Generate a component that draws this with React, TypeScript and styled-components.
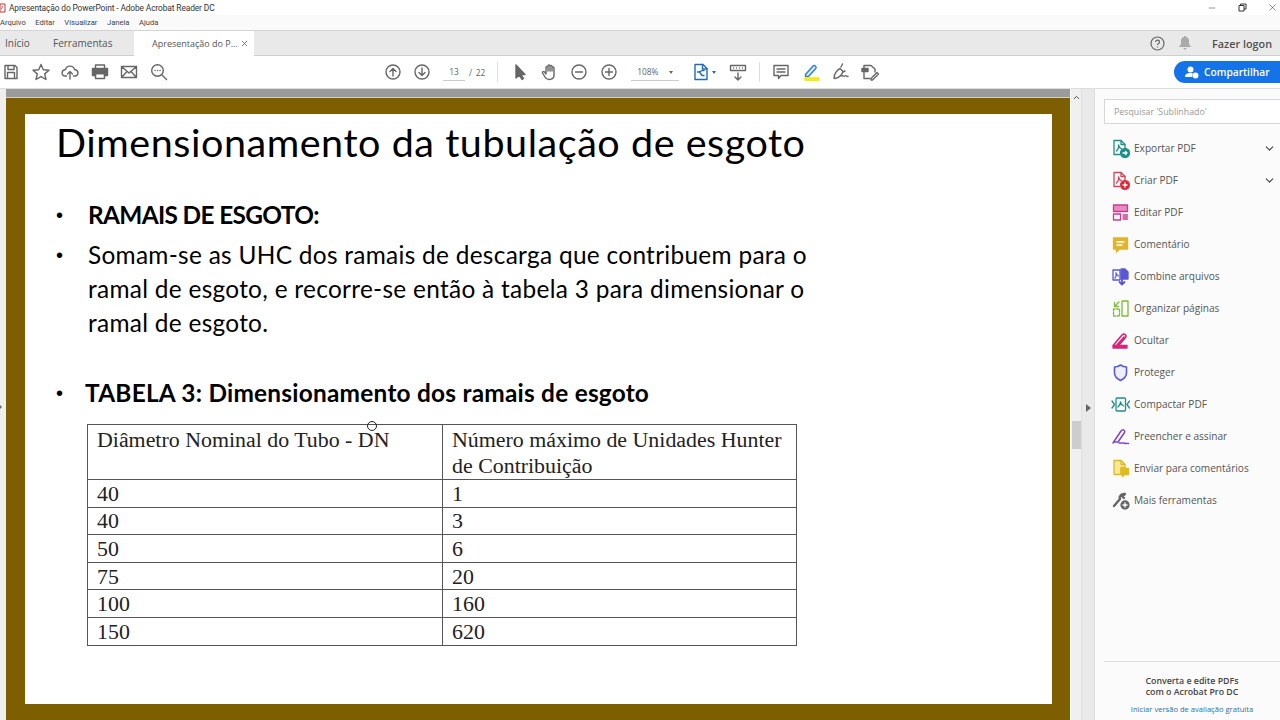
import React from "react";
import styled, { createGlobalStyle } from "styled-components";
import { ChevronDown, ChevronUp, Minus, X } from "lucide-react";

const GlobalStyle = createGlobalStyle`
  html, body {
    margin: 0;
    padding: 0;
    width: 1280px;
    height: 720px;
    overflow: hidden;
    background: #fff;
    font-family: "Open Sans", "Noto Sans", sans-serif;
  }
`;

const Window = styled.div`
  width: 1280px;
  height: 720px;
  display: flex;
  flex-direction: column;
  overflow: hidden;
  position: relative;
`;

const TitleBar = styled.div`
  height: 15px;
  display: flex;
  align-items: center;
  background: #fff;
  color: #333;
  font-family: Roboto, sans-serif;
  font-size: 8.4px;
  letter-spacing: -0.12px;
  flex: none;
`;

const TitleIcon = styled.svg`
  width: 6px;
  height: 10px;
  margin-right: 3px;
`;

const WindowButtons = styled.div`
  margin-left: auto;
  margin-right: -8px;
  display: flex;
  align-items: center;
  color: #333;
`;

const WindowButton = styled.div`
  width: 30.5px;
  display: flex;
  justify-content: center;
  align-items: center;
`;

const MenuBar = styled.div`
  height: 15px;
  display: flex;
  align-items: center;
  gap: 9.5px;
  background: #fafafa;
  color: #444;
  font-family: Roboto, sans-serif;
  font-size: 7.6px;
  flex: none;
`;

const TabBar = styled.div`
  height: 26px;
  display: flex;
  align-items: stretch;
  background: #e9e9e9;
  border-top: 1px solid #d4d4d4;
  border-bottom: 1px solid #cfcfcf;
  box-sizing: border-box;
  flex: none;
`;

const PlainTab = styled.div<{ $width: number }>`
  width: ${(p) => p.$width}px;
  display: flex;
  align-items: center;
  padding-left: 5px;
  box-sizing: border-box;
  font-size: 10px;
  color: #555;
`;

const ActiveTab = styled.div`
  width: 120px;
  display: flex;
  align-items: center;
  justify-content: space-between;
  padding: 0 5px 0 18px;
  box-sizing: border-box;
  background: #fff;
  margin-bottom: -1px;
  font-size: 9px;
  color: #555;
  white-space: nowrap;
`;

const TabRight = styled.div`
  margin-left: auto;
  display: flex;
  align-items: center;
  padding-right: 8px;
  color: #555;
`;

const LogonLabel = styled.span`
  margin-left: 21px;
  font-size: 10.8px;
  font-weight: 600;
  color: #505050;
`;

const ToolBar = styled.div`
  height: 33px;
  display: flex;
  align-items: center;
  background: #fff;
  border-bottom: 1px solid #ddd;
  box-sizing: border-box;
  flex: none;
`;

const ToolGroup = styled.div<{ $left: number }>`
  display: flex;
  align-items: center;
  margin-left: ${(p) => p.$left}px;
`;

const ToolIcon = styled.svg<{ $gap?: number }>`
  width: 18px;
  height: 18px;
  flex: none;
  margin-left: ${(p) => p.$gap ?? 0}px;
  fill: none;
  stroke: #666;
  stroke-width: 1.4;
  stroke-linecap: round;
  stroke-linejoin: round;
`;

const PageInput = styled.div<{ $width: number; $left: number }>`
  width: ${(p) => p.$width}px;
  margin-left: ${(p) => p.$left}px;
  height: 17px;
  line-height: 16px;
  font-size: 8.4px;
  color: #666;
  text-align: center;
  border-bottom: 1px solid #ccc;
  box-sizing: border-box;
  position: relative;
  flex: none;
`;

const ZoomValue = styled.span`
  margin-right: 15px;
`;

const PageTotal = styled.span`
  margin-left: 4px;
  font-size: 8.4px;
  color: #666;
  word-spacing: 1.5px;
`;

const ToolSep = styled.div<{ $left: number }>`
  width: 1px;
  height: 20px;
  background: #ddd;
  margin-left: ${(p) => p.$left}px;
  flex: none;
`;

const Caret = styled.div`
  position: absolute;
  right: 6px;
  top: 7px;
  border-left: 2.5px solid transparent;
  border-right: 2.5px solid transparent;
  border-top: 3px solid #666;
`;

const SmallCaret = styled.div`
  margin-left: 2px;
  border-left: 2.5px solid transparent;
  border-right: 2.5px solid transparent;
  border-top: 3px solid #1f6bb5;
  flex: none;
`;

const ShareButton = styled.div`
  margin-left: auto;
  width: 106px;
  height: 22px;
  border-radius: 11px 0 0 11px;
  background: #1473e6;
  color: #fff;
  font-size: 10.2px;
  font-weight: 600;
  display: flex;
  align-items: center;
  gap: 5px;
  padding-left: 11px;
  box-sizing: border-box;
  flex: none;
`;

const Body = styled.div`
  flex: 1;
  min-height: 0;
  display: flex;
`;

const Viewer = styled.div`
  width: 1070px;
  flex: none;
  display: flex;
  flex-direction: column;
  background: #efefef;
  padding-left: 6px;
  box-sizing: border-box;
`;

const GrayStrip = styled.div`
  height: 9px;
  background: #9b9b9b;
  border-bottom: 1px solid #d8d2c0;
  box-sizing: border-box;
  flex: none;
`;

const SlideFrame = styled.div`
  flex: 1;
  min-height: 0;
  background: #7d5e00;
  padding: 16px 18px 16px 19px;
  box-sizing: border-box;
`;

const Slide = styled.div`
  height: 100%;
  background: #fff;
  box-sizing: border-box;
  padding: 4px 0 0 31px;
  font-family: Lato, "Open Sans", sans-serif;
  color: #000;
`;

const SlideTitle = styled.h1`
  margin: 0;
  font-weight: 400;
  font-size: 39.5px;
  line-height: 48px;
  letter-spacing: 0.55px;
  white-space: nowrap;
`;

const BulletList = styled.div<{ $top: number }>`
  margin-top: ${(p) => p.$top}px;
  display: flex;
  align-items: flex-start;
  font-size: 24.4px;
  line-height: 34px;
`;

const Bullet = styled.span<{ $width: number }>`
  width: ${(p) => p.$width}px;
  flex: none;
  font-family: "Liberation Sans", sans-serif;
  font-size: 20px;
`;

const BulletText = styled.div<{ $bold?: boolean; $spacing: number }>`
  font-weight: ${(p) => (p.$bold ? 700 : 400)};
  letter-spacing: ${(p) => p.$spacing}px;
  width: 730px;
`;

const TableWrap = styled.div`
  margin: 14px 0 0 31px;
`;

const DataTable = styled.table`
  width: 710px;
  border-collapse: collapse;
  table-layout: fixed;
  font-family: "Liberation Serif", serif;
  font-size: 21.9px;
  color: #222;
  td {
    border: 1.5px solid #555;
    padding: 0 0 0 9px;
    height: 27.6px;
    line-height: 25px;
    box-sizing: border-box;
  }
  tr:first-child td {
    height: 55px;
    vertical-align: top;
    line-height: 26px;
    padding-top: 2px;
  }
  td:first-child {
    width: 355px;
  }
`;

const PointerMark = styled.div`
  position: absolute;
  left: 367px;
  top: 421px;
  width: 10px;
  height: 10px;
  border: 1px solid #222;
  border-radius: 50%;
  box-sizing: border-box;
`;

const ScrollTrack = styled.div`
  width: 11px;
  flex: none;
  background: #f0f0f0;
  border-left: 1px solid #fff;
  display: flex;
  flex-direction: column;
  align-items: center;
  padding-top: 4px;
  box-sizing: border-box;
  color: #444;
`;

const ScrollThumb = styled.div`
  width: 9px;
  height: 28px;
  margin-top: 319px;
  background: #cdcdcd;
`;

const Gutter = styled.div`
  width: 14px;
  flex: none;
  background: #e9e9e9;
  border-left: 1px solid #dedede;
  border-right: 1px solid #dedede;
  box-sizing: border-box;
  display: flex;
  justify-content: center;
  padding: 315px 0 0 1px;
`;

const GutterArrow = styled.div`
  width: 0;
  height: 0;
  border-top: 4px solid transparent;
  border-bottom: 4px solid transparent;
  border-left: 5px solid #666;
`;

const LeftArrow = styled.div`
  position: absolute;
  left: 0;
  top: 405px;
  width: 0;
  height: 0;
  border-top: 2.5px solid transparent;
  border-bottom: 2.5px solid transparent;
  border-left: 2.5px solid #666;
`;

const Side = styled.aside`
  flex: 1;
  min-width: 0;
  background: #fbfbfb;
  display: flex;
  flex-direction: column;
  padding: 10px 0 0 9px;
  box-sizing: border-box;
`;

const SearchBox = styled.div`
  height: 25px;
  border: 1px solid #d8d8d8;
  border-right: none;
  background: #fff;
  box-sizing: border-box;
  font-size: 8.8px;
  line-height: 24px;
  color: #999;
  padding-left: 9px;
`;

const ToolList = styled.div`
  margin-top: 8px;
  display: flex;
  flex-direction: column;
`;

const ToolRow = styled.div`
  height: 32px;
  display: flex;
  align-items: center;
  padding-left: 7px;
  font-size: 10.1px;
  color: #555;
`;

const RowIcon = styled.svg`
  width: 19px;
  height: 19px;
  flex: none;
  margin-right: 4px;
  fill: none;
  stroke-width: 1.3;
  stroke-linecap: round;
  stroke-linejoin: round;
`;

const RowChevron = styled.div`
  margin-left: auto;
  padding-right: 4px;
  display: flex;
  color: #444;
`;

const Promo = styled.div`
  margin-top: auto;
  height: 59px;
  border-top: 1px solid #ddd;
  text-align: center;
  padding-top: 14px;
  box-sizing: border-box;
  font-size: 8.8px;
  line-height: 11px;
  font-weight: 600;
  color: #444;
`;

const PromoLink = styled.div`
  margin-top: 6px;
  font-size: 7.6px;
  font-weight: 400;
  color: #2f6ea5;
`;

const rows: { label: string; chevron?: boolean; icon: React.ReactNode }[] = [
  {
    label: "Exportar PDF",
    chevron: true,
    icon: (
      <g stroke="#1d8f8b">
        <path d="M3 1.500h7l4 4v4M3 1.500v14h6" />
        <path d="M10 1.500v4h4" />
        <path d="M5.500 12c2-2 2.500-4 2-6 .5 2 1.500 3.500 3 4" />
        <circle cx="14" cy="14" r="4.500" fill="#1d8f8b" />
        <path d="M12 14h4M14.500 12.500l1.500 1.500-1.500 1.500" stroke="#fff" />
      </g>
    ),
  },
  {
    label: "Criar PDF",
    chevron: true,
    icon: (
      <g stroke="#d9435a">
        <path d="M3 1.500h7l4 4v4M3 1.500v14h6" />
        <path d="M10 1.500v4h4" />
        <path d="M5.500 12c2-2 2.500-4 2-6 .5 2 1.500 3.500 3 4" />
        <circle cx="14" cy="14" r="4.500" fill="#d9232e" />
        <path d="M12 14h4M14 12v4" stroke="#fff" />
      </g>
    ),
  },
  {
    label: "Editar PDF",
    icon: (
      <g stroke="#cc3a8e">
        <rect x="2.500" y="2" width="14" height="6.500" fill="#e88cc0" />
        <rect x="2.500" y="11" width="7" height="6" />
        <path d="M12 12h4.500M12 14h4.500M12 16h4.500" />
      </g>
    ),
  },
  {
    label: "Comentário",
    icon: (
      <g>
        <path d="M2.500 3h14v11h-8l-3 3v-3h-3z" fill="#e0b52a" stroke="#e0b52a" />
        <path d="M6 7h7M6 10h5" stroke="#fff" />
      </g>
    ),
  },
  {
    label: "Combine arquivos",
    icon: (
      <g stroke="#5a57d6">
        <path d="M2 3h7v10H2z" />
        <path d="M10 2h4l3 3v7h-7z" fill="#5a57d6" />
        <path d="M4 11c1-1 1.500-3 1-5 .5 1.500 1 2.500 2.500 3" />
        <path d="M11 11v6M8.500 15l2.500 2.500 2.500-2.500" strokeWidth="1.800" />
      </g>
    ),
  },
  {
    label: "Organizar páginas",
    icon: (
      <g stroke="#7fbb35">
        <rect x="11" y="2" width="6" height="15" />
        <path d="M2.500 10v7h6v-7z" strokeDasharray="2 1.500" />
        <path d="M8 3 4 7M3.500 3.500V7.500H7.500" />
      </g>
    ),
  },
  {
    label: "Ocultar",
    icon: (
      <g>
        <path d="M2.500 14 11 4c2-2 5 0 3.500 2.500L8 14M6 14l7-8" stroke="#d6257a" strokeWidth="1.600" />
        <path d="M2 14.500h14v2.500H2z" fill="#d6257a" stroke="#d6257a" />
      </g>
    ),
  },
  {
    label: "Proteger",
    icon: <path d="M9.500 2c2 1.500 4 2 6 2v6c0 3.500-3 6-6 7.500-3-1.500-6-4-6-7.500V4c2 0 4-.5 6-2z" fill="#eeeefc" stroke="#5a57d6" strokeWidth="1.600" />,
  },
  {
    label: "Compactar PDF",
    icon: (
      <g stroke="#1d8f8b">
        <rect x="5" y="3" width="9.500" height="13" rx="1" />
        <path d="M7 12c1.500-1.500 2.500-3 2.500-5 .5 2 1.500 3.500 3 4" />
        <path d="M1 6l2.500 3.500L1 13M18.500 6 16 9.500 18.500 13" />
      </g>
    ),
  },
  {
    label: "Preencher e assinar",
    icon: (
      <g stroke="#7d45c8" strokeWidth="1.500">
        <path d="M2 16 10 4c2-2.500 4.500-.5 3.500 1.500L7 15H2.500" />
        <path d="M8 16c2-1 2 1 3.500 0s1.500 1 3 .5 1.500 0 3 0" />
      </g>
    ),
  },
  {
    label: "Enviar para comentários",
    icon: (
      <g stroke="#e0bb1f">
        <path d="M3 1.500h7l4 4v3h-4v7H3z" fill="#f7e79a" />
        <path d="M10 1.500v4h4" />
        <path d="M10 9.500h7.500v6h-4l-2 2v-2H10z" fill="#e0bb1f" />
      </g>
    ),
  },
  {
    label: "Mais ferramentas",
    icon: (
      <g>
        <path d="M3 15 9 8c-1-3 1.500-5.500 5-5l-2.500 2.500 1.500 1.500" stroke="#666" strokeWidth="2.400" />
        <circle cx="14" cy="14" r="4" fill="#666" stroke="#666" />
        <path d="M12 14h4M14 12v4" stroke="#fff" />
      </g>
    ),
  },
];

const tableRows = [
  ["40", "1"],
  ["40", "3"],
  ["50", "6"],
  ["75", "20"],
  ["100", "160"],
  ["150", "620"],
];

export default function App() {
  return (
    <Window>
      <GlobalStyle />
      <TitleBar>
        <TitleIcon viewBox="0 0 6 10">
          <path d="M0 1h5v8H0z" fill="#fff" stroke="#c33" />
          <path d="M1 6c1-1 1.500-2 1-3" stroke="#c33" fill="none" />
        </TitleIcon>
        Apresentação do PowerPoint - Adobe Acrobat Reader DC
        <WindowButtons>
          <WindowButton>
            <Minus size={10} strokeWidth={1.2} />
          </WindowButton>
          <WindowButton>
            <svg width="9" height="9" viewBox="0 0 9 9" fill="none" stroke="#333">
              <path d="M1 2.500h5v5.500H1zM2.500 2.500V1H8v5H6" />
            </svg>
          </WindowButton>
          <WindowButton>
            <X size={11} strokeWidth={1.2} />
          </WindowButton>
        </WindowButtons>
      </TitleBar>
      <MenuBar>
        <span>Arquivo</span>
        <span>Editar</span>
        <span>Visualizar</span>
        <span>Janela</span>
        <span>Ajuda</span>
      </MenuBar>
      <TabBar>
        <PlainTab $width={48}>Início</PlainTab>
        <PlainTab $width={86}>Ferramentas</PlainTab>
        <ActiveTab>
          Apresentação do P...
          <X size={9} strokeWidth={2} />
        </ActiveTab>
        <TabRight>
          <svg width="15" height="15" viewBox="0 0 15 15" fill="none" stroke="#666" strokeWidth="1.200">
            <circle cx="7.500" cy="7.500" r="6.500" />
            <path d="M5.500 6c0-2.500 4-2.500 4 0 0 1.500-2 1.500-2 3M7.500 10.500v1" />
          </svg>
          <svg width="12" height="14" viewBox="0 0 12 14" fill="#aaa" style={{ marginLeft: 14 }}>
            <path d="M6 0c.8 0 1 .5 1 1 2 .5 3 2 3 4v3l2 3H0l2-3V5c0-2 1-3.500 3-4 0-.5.2-1 1-1zM4.500 12h3c0 2-3 2-3 0z" />
          </svg>
          <LogonLabel>Fazer logon</LogonLabel>
        </TabRight>
      </TabBar>
      <ToolBar>
        <ToolGroup $left={2}>
          <ToolIcon viewBox="0 0 18 18">
            <path d="M3 2.500h10l2 2v11H3zM6 2.500v4h6v-4M5.500 15.500v-6h7v6" />
          </ToolIcon>
          <ToolIcon viewBox="0 0 18 18" $gap={11.500}>
            <path d="M9 1.500l2.300 5.200 5.700.5-4.300 3.700 1.300 5.600L9 13.600l-5 2.900 1.300-5.600L1 7.200l5.700-.5z" />
          </ToolIcon>
          <ToolIcon viewBox="0 0 18 18" $gap={11.500}>
            <path d="M5.500 13H4c-4 0-4-6 .5-6.500C5.500 2 12.500 2 13.500 6.500 18 7 18 13 14 13h-1.500M9 16V8.500M6.500 11 9 8.500l2.500 2.500" />
          </ToolIcon>
          <ToolIcon viewBox="0 0 18 18" $gap={11.500}>
            <path d="M4.500 5V2h9v3" />
            <path d="M1.500 5.500h15v7h-3v-2h-9v2h-3z" fill="#666" />
            <path d="M4.500 10.500h9v5h-9z" />
          </ToolIcon>
          <ToolIcon viewBox="0 0 18 18" $gap={11.500}>
            <path d="M1.500 3.500h15v11h-15zM1.500 3.500 9 10l7.500-6.500M1.500 14.500 7 8.500M16.500 14.500 11 8.500" />
          </ToolIcon>
          <ToolIcon viewBox="0 0 18 18" $gap={12}>
            <circle cx="7.500" cy="7.500" r="5.800" />
            <path d="M12 12l4.500 4.500M5 7.500h.1M7.500 7.500h.1M10 7.500h.1" />
          </ToolIcon>
        </ToolGroup>
        <ToolGroup $left={216}>
          <ToolIcon viewBox="0 0 18 18">
            <circle cx="9" cy="9" r="7" />
            <path d="M9 13V5.500M6 8.500l3-3 3 3" />
          </ToolIcon>
          <ToolIcon viewBox="0 0 18 18" $gap={11}>
            <circle cx="9" cy="9" r="7" />
            <path d="M9 5v7.500M6 9.500l3 3 3-3" />
          </ToolIcon>
          <PageInput $width={22} $left={12}>
            13
          </PageInput>
          <PageTotal>/ 22</PageTotal>
          <ToolSep $left={12} />
          <ToolIcon viewBox="0 0 18 18" $gap={13}>
            <path d="M5 2v13l3.200-3 2.800 4.500 1.500-1-2.500-4H14z" fill="#666" />
          </ToolIcon>
          <ToolIcon viewBox="0 0 18 18" $gap={12}>
            <path d="M5 11V4.500c0-1.500 2-1.500 2 0V8M7 8V3c0-1.500 2-1.500 2 0v5M9 8V3.500c0-1.500 2-1.500 2 0V8M11 8V5c0-1.500 2-1.500 2 0v7c0 5-7 6-9 2l-2.500-4c-.5-1.500 1.500-2 2.500-.5L5 11" />
          </ToolIcon>
          <ToolIcon viewBox="0 0 18 18" $gap={11}>
            <circle cx="9" cy="9" r="7" />
            <path d="M5.500 9h7" />
          </ToolIcon>
          <ToolIcon viewBox="0 0 18 18" $gap={12}>
            <circle cx="9" cy="9" r="7" />
            <path d="M5.500 9h7M9 5.500v7" />
          </ToolIcon>
          <PageInput $width={48} $left={13}>
            <ZoomValue>108%</ZoomValue>
            <Caret />
          </PageInput>
          <ToolIcon viewBox="0 0 18 18" $gap={13} style={{ stroke: "#1f6bb5" }}>
            <path d="M3 1.500h8l4 4v11H3z" />
            <path d="M10.500 1.500v4.500H15" />
            <path d="M5.500 9h2M10 7.500h2M10 12.500h2M7.500 9l2.500-1.500M7.500 9l2.500 3.500" />
          </ToolIcon>
          <SmallCaret />
          <ToolIcon viewBox="0 0 18 18" $gap={13}>
            <path d="M1.500 2.500h15v5h-15zM4.500 5v.1M7.500 5v.1M10.500 5v.1M13.500 5v.1M9 10v7M6 14l3 3 3-3" />
          </ToolIcon>
          <ToolSep $left={12} />
          <ToolIcon viewBox="0 0 18 18" $gap={12}>
            <path d="M2 2.500h14v10H9l-2.500 3v-3H2zM5 6h8M5 9h8" />
          </ToolIcon>
          <ToolIcon viewBox="0 0 18 18" $gap={12} style={{ stroke: "#2f7fd1" }}>
            <path d="M3.500 11.500 11 3c1.500-1.500 4 .5 2.800 2.500L6.500 13.500H3.500z" fill="#d7e8f8" />
            <path d="M3 15h14v2.500H3z" fill="#f5ea17" stroke="#f5ea17" />
          </ToolIcon>
          <ToolIcon viewBox="0 0 18 18" $gap={11.500}>
            <path d="M2 15c0-4 3-8 6-9.500l3 3c-1 3-3 6-8 7zM9 4l1.500-3M11 9l2-1M10 13c1.500-1 1.500 1 3 0s1.500 1 3 .3" />
          </ToolIcon>
          <ToolIcon viewBox="0 0 18 18" $gap={11.500}>
            <path d="M3 5.500V2.500h7l4 3.500v3M3 9.500v6h6" />
            <path d="M1 5.500h6v3H1z" fill="#666" />
            <path d="M10 15.500l6-6 1.500 1.500-6 6H10z" />
          </ToolIcon>
        </ToolGroup>
        <ShareButton>
          <svg width="14" height="13" viewBox="0 0 14 13" fill="#fff">
            <circle cx="5.500" cy="3.500" r="3" />
            <path d="M0 11c0-3 2-4 5.500-4 1 0 2 .2 2.500.5C7 8.500 7 10 7.500 11z" />
            <circle cx="10.500" cy="9.500" r="3" />
          </svg>
          Compartilhar
        </ShareButton>
      </ToolBar>
      <Body>
        <Viewer>
          <GrayStrip />
          <SlideFrame>
            <Slide>
              <SlideTitle>Dimensionamento da tubulação de esgoto</SlideTitle>
              <BulletList $top={32}>
                <Bullet $width={32}>•</Bullet>
                <BulletText $bold $spacing={-0.65}>
                  RAMAIS DE ESGOTO:
                </BulletText>
              </BulletList>
              <BulletList $top={6}>
                <Bullet $width={32}>•</Bullet>
                <BulletText $spacing={0.3}>
                  Somam-se as UHC dos ramais de descarga que contribuem para o ramal de esgoto, e recorre-se então à
                  tabela 3 para dimensionar o ramal de esgoto.
                </BulletText>
              </BulletList>
              <BulletList $top={36}>
                <Bullet $width={29}>•</Bullet>
                <BulletText $bold $spacing={0.24}>
                  TABELA 3: Dimensionamento dos ramais de esgoto
                </BulletText>
              </BulletList>
              <TableWrap>
                <DataTable>
                  <tbody>
                    <tr>
                      <td>Diâmetro Nominal do Tubo - DN</td>
                      <td>Número máximo de Unidades Hunter de Contribuição</td>
                    </tr>
                    {tableRows.map((r, i) => (
                      <tr key={i}>
                        <td>{r[0]}</td>
                        <td>{r[1]}</td>
                      </tr>
                    ))}
                  </tbody>
                </DataTable>
              </TableWrap>
            </Slide>
          </SlideFrame>
        </Viewer>
        <ScrollTrack>
          <ChevronUp size={9} strokeWidth={2.5} />
          <ScrollThumb />
        </ScrollTrack>
        <Gutter>
          <GutterArrow />
        </Gutter>
        <Side>
          <SearchBox>Pesquisar 'Sublinhado'</SearchBox>
          <ToolList>
            {rows.map((r) => (
              <ToolRow key={r.label}>
                <RowIcon viewBox="0 0 19 19">{r.icon}</RowIcon>
                {r.label}
                {r.chevron && (
                  <RowChevron>
                    <ChevronDown size={13} strokeWidth={2} />
                  </RowChevron>
                )}
              </ToolRow>
            ))}
          </ToolList>
          <Promo>
            Converta e edite PDFs
            <br />
            com o Acrobat Pro DC
            <PromoLink>Iniciar versão de avaliação gratuita</PromoLink>
          </Promo>
        </Side>
      </Body>
      <LeftArrow />
      <PointerMark />
    </Window>
  );
}
